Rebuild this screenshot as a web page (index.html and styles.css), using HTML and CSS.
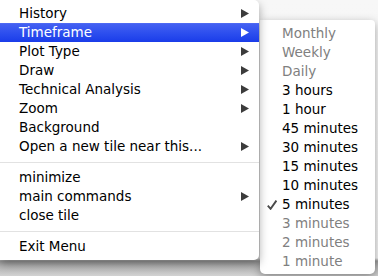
FILE: index.html
```html
<!DOCTYPE html>
<html>
<head>
<meta charset="utf-8">
<link rel="stylesheet" href="styles.css">
</head>
<body>
<div class="stage">
  <div class="menu main">
    <div class="item sub">History<svg class="arrow" viewBox="0 0 8 9"><path d="M0 0L8 4.5L0 9Z"/></svg></div>
    <div class="item sub active">Timeframe<svg class="arrow" viewBox="0 0 8 9"><path d="M0 0L8 4.5L0 9Z"/></svg></div>
    <div class="item sub">Plot Type<svg class="arrow" viewBox="0 0 8 9"><path d="M0 0L8 4.5L0 9Z"/></svg></div>
    <div class="item sub">Draw<svg class="arrow" viewBox="0 0 8 9"><path d="M0 0L8 4.5L0 9Z"/></svg></div>
    <div class="item sub">Technical Analysis<svg class="arrow" viewBox="0 0 8 9"><path d="M0 0L8 4.5L0 9Z"/></svg></div>
    <div class="item sub">Zoom<svg class="arrow" viewBox="0 0 8 9"><path d="M0 0L8 4.5L0 9Z"/></svg></div>
    <div class="item">Background</div>
    <div class="item sub">Open a new tile near this...<svg class="arrow" viewBox="0 0 8 9"><path d="M0 0L8 4.5L0 9Z"/></svg></div>
    <div class="sep"></div>
    <div class="item">minimize</div>
    <div class="item sub">main commands<svg class="arrow" viewBox="0 0 8 9"><path d="M0 0L8 4.5L0 9Z"/></svg></div>
    <div class="item">close tile</div>
    <div class="sep"></div>
    <div class="item">Exit Menu</div>
  </div>
  <div class="menu submenu">
    <div class="item disabled"><span class="mark"></span>Monthly</div>
    <div class="item disabled"><span class="mark"></span>Weekly</div>
    <div class="item disabled"><span class="mark"></span>Daily</div>
    <div class="item"><span class="mark"></span>3 hours</div>
    <div class="item"><span class="mark"></span>1 hour</div>
    <div class="item"><span class="mark"></span>45 minutes</div>
    <div class="item"><span class="mark"></span>30 minutes</div>
    <div class="item"><span class="mark"></span>15 minutes</div>
    <div class="item"><span class="mark"></span>10 minutes</div>
    <div class="item"><span class="mark"><svg class="check" viewBox="0 0 10 10"><path d="M0.8 5.6L3.6 8.8L9.4 0.6"/></svg></span>5 minutes</div>
    <div class="item disabled"><span class="mark"></span>3 minutes</div>
    <div class="item disabled"><span class="mark"></span>2 minutes</div>
    <div class="item disabled"><span class="mark"></span>1 minute</div>
  </div>
</div>
</body>
</html>
```
FILE: styles.css
```css
html, body {
  margin: 0;
  padding: 0;
}
body {
  width: 378px;
  height: 276px;
  overflow: hidden;
  background: linear-gradient(#f7f7f7 0, #f4f4f4 258px, #9a9a9a 261px, #b4b4b4 266px, #d2d2d2 276px);
  font-family: "DejaVu Sans", "Lucida Grande", sans-serif;
  font-size: 13.5px;
  color: #000;
}
.stage {
  display: flex;
  align-items: flex-start;
}
.menu {
  background: #fff;
  display: flex;
  flex-direction: column;
  padding: 4px 0;
}
.main {
  width: 259px;
  height: 252px;
  border-radius: 0 5px 5px 0;
  box-shadow: 0 4px 10px rgba(0, 0, 0, 0.35);
  position: relative;
  z-index: 1;
}
.submenu {
  width: 115px;
  margin-left: 1px;
  margin-top: 20px;
  padding: 4px 0 3px;
  border-radius: 0 4px 5px 5px;
  box-shadow: 0 3px 10px rgba(0, 0, 0, 0.35);
}
.item {
  height: 19px;
  line-height: 19px;
  display: flex;
  align-items: center;
  white-space: nowrap;
}
.main .item {
  padding: 0 10px 0 19px;
}
.item.sub {
  justify-content: space-between;
}
.arrow {
  width: 8px;
  height: 9px;
  fill: #3c3c3c;
  flex-shrink: 0;
}
.active {
  background: linear-gradient(#6079f4 0, #4461f2 4%, #2a4cee 60%, #1a3ce9 100%);
  color: #fff;
}
.active .arrow {
  fill: #fff;
}
.sep {
  height: 12px;
  display: flex;
  align-items: center;
}
.sep::after {
  content: "";
  display: block;
  width: 100%;
  height: 1px;
  background: #e2e2e2;
}
.submenu .item {
  padding-left: 7px;
}
.mark {
  width: 15px;
  height: 19px;
  display: flex;
  align-items: center;
  flex-shrink: 0;
}
.check {
  width: 10px;
  height: 10px;
  fill: none;
  stroke: #4a4a4a;
  stroke-width: 1.9;
}
.disabled {
  color: #808080;
}
```
